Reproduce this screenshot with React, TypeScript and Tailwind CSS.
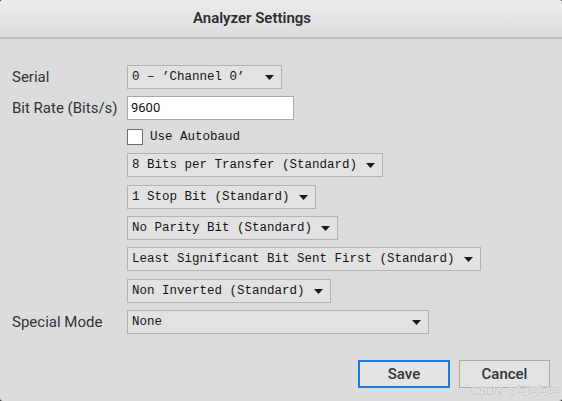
import React from 'react';

const mono = { fontFamily: '"Liberation Mono", "DejaVu Sans Mono", monospace' };

function Arrow() {
  return (
    <svg width="9" height="5" viewBox="0 0 9 5" className="shrink-0">
      <path d="M0 0 H9 L4.5 5 Z" fill="#1a1a1a" />
    </svg>
  );
}

function Select({ value, width, extra = '' }: { value: string; width: string; extra?: string }) {
  return (
    <div
      className={`${width} ${extra} h-[24px] flex items-center justify-between pl-[4px] pr-[7px] bg-[#e2e2e2] border border-[#b3b3b3] text-[12.5px] text-[#141414] whitespace-pre`}
      style={mono}
    >
      <span>{value}</span>
      <Arrow />
    </div>
  );
}

export default function App() {
  const rows = [
    { value: '8 Bits per Transfer (Standard)', width: 'w-[256px]', extra: '' },
    { value: '1 Stop Bit (Standard)', width: 'w-[189px]', extra: 'mt-[1px]' },
    { value: 'No Parity Bit (Standard)', width: 'w-[211px]', extra: '' },
    { value: 'Least Significant Bit Sent First (Standard)', width: 'w-[354px]', extra: '' },
    { value: 'Non Inverted (Standard)', width: 'w-[204px]', extra: 'mt-[1px]' },
  ];

  return (
    <div className="w-[562px] h-[401px] bg-[#3a3a3a]">
      <div
        className="relative w-full h-full rounded-[3px] overflow-hidden bg-[#dcdcdc] flex flex-col"
        style={{ fontFamily: 'Roboto, "Liberation Sans", sans-serif' }}
      >
        {/* TITLE */}
        <div className="h-[39px] shrink-0 flex items-center justify-center pr-[58px] bg-gradient-to-b from-[#ececec] to-[#dcdcdc] border-b-2 border-[#bdbdbd]">
          <span className="text-[15px] font-semibold text-[#2a2d33] -mt-[1px]">Analyzer Settings</span>
        </div>

        {/* FORM */}
        <div className="grid grid-cols-[115px_auto] gap-y-[7px] pl-[12px] pt-[26px] text-[15px] text-[#2f343c] items-center">
          <span>Serial</span>
          <Select value={'0 \u2013 \u2019Channel 0\u2019'} width="w-[155px]" />

          <span>Bit Rate (Bits/s)</span>
          <div className="w-[167px] h-[24px] flex items-center pl-[3px] bg-white border border-[#a9a9a9] text-[13px] text-[#111]">
            9600
          </div>

          <span />
          <div className="h-[18px] flex items-center gap-[7px] mt-[1px]">
            <div className="w-[16px] h-[16px] bg-white border border-[#6e6e6e]" />
            <span className="text-[12.5px] text-[#141414]" style={mono}>Use Autobaud</span>
          </div>

          {rows.map((r) => (
            <React.Fragment key={r.value}>
              <span />
              <Select value={r.value} width={r.width} extra={r.extra} />
            </React.Fragment>
          ))}

          <span>Special Mode</span>
          <Select value="None" width="w-[302px]" />
        </div>

        {/* ACTIONS */}
        <div className="flex justify-end gap-[9px] pr-[12px] mt-[26px]">
          <button className="w-[92px] h-[28px] bg-[#e3e3e3] border-2 border-[#1f78dc] text-[15px] font-medium text-[#2f343c]">
            Save
          </button>
          <button className="w-[91px] h-[28px] bg-[#e3e3e3] border border-[#ababab] text-[15px] font-medium text-[#2f343c]">
            Cancel
          </button>
        </div>

        <span
          className="absolute right-[2px] bottom-[3px] text-[11px] leading-[13px] text-[#bdbdbd]"
          style={{ fontFamily: '"Liberation Sans", "Noto Sans CJK SC", sans-serif', textShadow: '0 0 1px #fff, 0 0 1px #fff' }}
        >
          CSDN @阿晌阿晌
        </span>
      </div>
    </div>
  );
}
